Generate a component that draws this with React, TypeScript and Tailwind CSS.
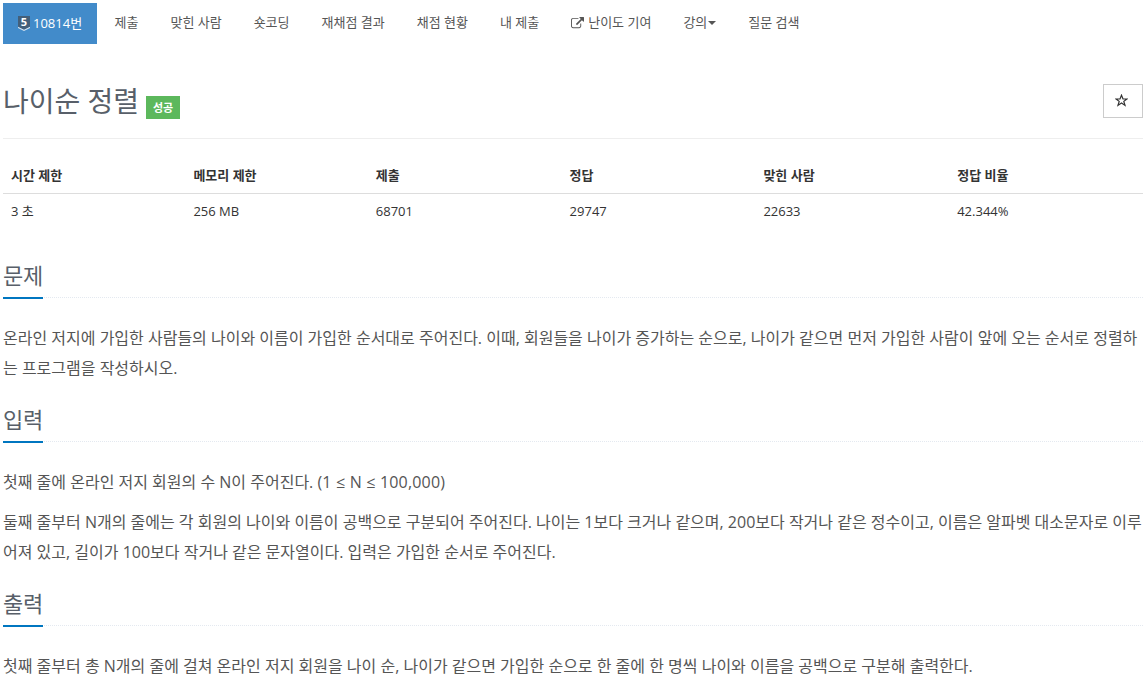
import type { ReactNode } from 'react';

const navItems = ['제출', '맞힌 사람', '숏코딩', '재채점 결과', '채점 현황', '내 제출'];

const stats = [
  { label: '시간 제한', value: '3 초', width: 'w-[16%]' },
  { label: '메모리 제한', value: '256 MB', width: 'w-[16%]' },
  { label: '제출', value: '68701', width: 'w-[17%]' },
  { label: '정답', value: '29747', width: 'w-[17%]' },
  { label: '맞힌 사람', value: '22633', width: 'w-[17%]' },
  { label: '정답 비율', value: '42.344%', width: 'w-[17%]' },
];

function TierBadge() {
  return (
    <span className="relative w-3 h-[15px] mr-[3px]">
      <svg className="w-3 h-[15px]" viewBox="0 0 12 15">
        <path d="M0 0h12v11l-6 3-6-3z" fill="#435f7a" />
        <path d="M0 10.7l6 3 6-3v1.3l-6 3-6-3z" fill="#d5e3f0" />
      </svg>
      <span className="absolute inset-x-0 top-0 text-center text-[11px] leading-[12px] font-bold">5</span>
    </span>
  );
}

function ExternalLinkIcon() {
  return (
    <svg className="w-[13px] h-[13px] mr-1" viewBox="0 0 1792 1792" fill="currentColor">
      <path d="M1408 928v320q0 119-84.5 203.5t-203.5 84.5h-832q-119 0-203.5-84.5t-84.5-203.5v-832q0-119 84.5-203.5t203.5-84.5h704q14 0 23 9t9 23v64q0 14-9 23t-23 9h-704q-66 0-113 47t-47 113v832q0 66 47 113t113 47h832q66 0 113-47t47-113v-320q0-14 9-23t23-9h64q14 0 23 9t9 23zm384-864v512q0 26-19 45t-45 19-45-19l-176-176-652 652q-10 10-23 10t-23-10l-114-114q-10-10-10-23t10-23l652-652-176-176q-19-19-19-45t19-45 45-19h512q26 0 45 19t19 45z" />
    </svg>
  );
}

function StarIcon() {
  return (
    <svg className="w-[13px] h-[13px] mr-[3px] mb-[2px]" viewBox="0 0 13 13" fill="none" stroke="currentColor" strokeWidth="1.2">
      <path d="M6.5 1.2L8 5h3.9L8.8 7.4 10 11.4 6.5 9 3 11.4 4.2 7.4 1.1 5H5z" />
    </svg>
  );
}

function NavLink({ children }: { children: ReactNode }) {
  return (
    <a href="#" className="flex items-center h-10 px-[15px] mr-[2px] whitespace-nowrap">
      {children}
    </a>
  );
}

function Section({ title, children }: { title: string; children: ReactNode }) {
  return (
    <section className="mb-[15px]">
      <div className="h-[44px] mb-[25px] border-b border-dotted border-[#e4e9f0]">
        <h2 className="inline-block h-[45px] border-b-2 border-[#0076c0] text-[22px] leading-[42px] text-[#585f69] tracking-[-0.24px]">
          {title}
        </h2>
      </div>
      <div className="text-base leading-[30px] text-[#555] whitespace-nowrap">{children}</div>
    </section>
  );
}

export default function App() {
  return (
    <div className="w-[1147px] h-[679px] overflow-hidden bg-white pl-[3px] pr-1 pt-[3px] text-[13px] text-[#333] font-['Open_Sans','Noto_Sans_CJK_KR',sans-serif]">
      <nav className="flex h-[41px] text-[#555]">
        <a href="#" className="flex items-center h-[41px] w-[94px] pl-[15px] mr-[2.5px] bg-[#428bca] text-white whitespace-nowrap">
          <TierBadge />
          10814번
        </a>
        {navItems.map((item) => (
          <NavLink key={item}>{item}</NavLink>
        ))}
        <NavLink>
          <ExternalLinkIcon />
          난이도 기여
        </NavLink>
        <NavLink>
          강의
          <span className="ml-px border-x-4 border-t-4 border-x-transparent border-t-[#555]" />
        </NavLink>
        <NavLink>질문 검색</NavLink>
      </nav>

      <header className="flex justify-between h-[95px] pt-10 border-b border-[#eee]">
        <div className="flex">
          <h1 className="w-[135px] text-[28px] leading-[34px] text-[#585f69] whitespace-nowrap">나이순 정렬</h1>
          <span className="flex items-center justify-center w-[34px] h-[23px] mt-3 ml-2 pt-px bg-[#5cb85c] text-[11px] font-bold text-white">
            성공
          </span>
        </div>
        <button className="flex items-center justify-center w-10 h-[34px] border border-[#ccc]">
          <StarIcon />
        </button>
      </header>

      <table className="w-full mt-[19px] mb-[25px] table-fixed text-left">
        <thead>
          <tr className="h-[35px] border-b border-[#ddd]">
            {stats.map((stat) => (
              <th key={stat.label} className={`${stat.width} px-2 pt-px font-bold`}>{stat.label}</th>
            ))}
          </tr>
        </thead>
        <tbody>
          <tr className="h-9">
            {stats.map((stat) => (
              <td key={stat.label} className="px-2">{stat.value}</td>
            ))}
          </tr>
        </tbody>
      </table>

      <Section title="문제">
        <p>
          온라인 저지에 가입한 사람들의 나이와 이름이 가입한 순서대로 주어진다. 이때, 회원들을 나이가 증가하는 순으로, 나이가 같으면 먼저 가입한 사람이 앞에 오는 순서로 정렬하
          <br />
          는 프로그램을 작성하시오.
        </p>
      </Section>

      <Section title="입력">
        <p className="mb-[10px]">
          첫째 줄에 온라인 저지 회원의 수 N이 주어진다. <span className="tracking-[0.18px]">(1 ≤ N ≤ 100,000)</span>
        </p>
        <p>
          둘째 줄부터 N개의 줄에는 각 회원의 나이와 이름이 공백으로 구분되어 주어진다. 나이는 1보다 크거나 같으며, 200보다 작거나 같은 정수이고, 이름은 알파벳 대소문자로 이루
          <br />
          어져 있고, 길이가 100보다 작거나 같은 문자열이다. 입력은 가입한 순서로 주어진다.
        </p>
      </Section>

      <Section title="출력">
        <p>첫째 줄부터 총 N개의 줄에 걸쳐 온라인 저지 회원을 나이 순, 나이가 같으면 가입한 순으로 한 줄에 한 명씩 나이와 이름을 공백으로 구분해 출력한다.</p>
      </Section>
    </div>
  );
}
